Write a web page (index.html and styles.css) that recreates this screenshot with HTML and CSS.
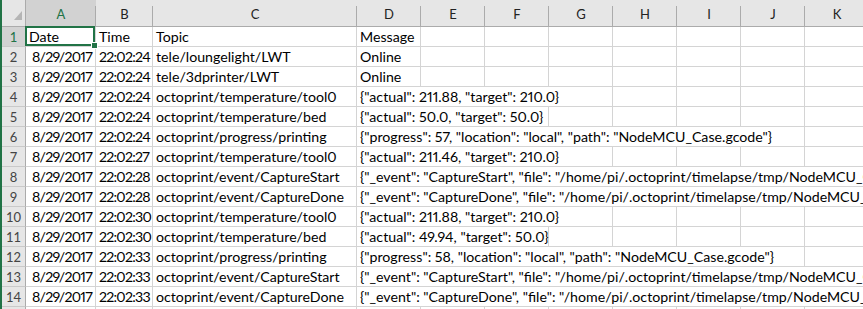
FILE: index.html
```html
<!DOCTYPE html>
<html>
<head>
    <meta charset="utf-8">
    <title>mqtt log.csv</title>
    <link rel="stylesheet" href="styles.css">
</head>
<body>
<div class="sheet" id="sheet">
    <div class="corner"><svg width="8" height="9" viewBox="0 0 8 9"><polygon points="8,0 8,9 0,9" fill="#b5b5b5"/></svg></div>
    <div class="hd sel">A</div>
    <div class="hd">B</div>
    <div class="hd">C</div>
    <div class="hd">D</div>
    <div class="hd">E</div>
    <div class="hd">F</div>
    <div class="hd">G</div>
    <div class="hd">H</div>
    <div class="hd">I</div>
    <div class="hd">J</div>
    <div class="hd">K</div>
</div>
<script>
    // date, time, topic, message, how many columns the message runs over
    const rows = [
        ['Date', 'Time', 'Topic', 'Message', 1],
        ['8/29/2017', '22:02:24', 'tele/loungelight/LWT', 'Online', 1],
        ['8/29/2017', '22:02:24', 'tele/3dprinter/LWT', 'Online', 1],
        ['8/29/2017', '22:02:24', 'octoprint/temperature/tool0', '{"actual": 211.88, "target": 210.0}', 4],
        ['8/29/2017', '22:02:24', 'octoprint/temperature/bed', '{"actual": 50.0, "target": 50.0}', 3],
        ['8/29/2017', '22:02:24', 'octoprint/progress/printing', '{"progress": 57, "location": "local", "path": "NodeMCU_Case.gcode"}', 7],
        ['8/29/2017', '22:02:27', 'octoprint/temperature/tool0', '{"actual": 211.46, "target": 210.0}', 4],
        ['8/29/2017', '22:02:28', 'octoprint/event/CaptureStart', '{"_event": "CaptureStart", "file": "/home/pi/.octoprint/timelapse/tmp/NodeMCU_Case-0.jpg"}', 8],
        ['8/29/2017', '22:02:28', 'octoprint/event/CaptureDone', '{"_event": "CaptureDone", "file": "/home/pi/.octoprint/timelapse/tmp/NodeMCU_Case-0.jpg"}', 8],
        ['8/29/2017', '22:02:30', 'octoprint/temperature/tool0', '{"actual": 211.88, "target": 210.0}', 4],
        ['8/29/2017', '22:02:30', 'octoprint/temperature/bed', '{"actual": 49.94, "target": 50.0}', 3],
        ['8/29/2017', '22:02:33', 'octoprint/progress/printing', '{"progress": 58, "location": "local", "path": "NodeMCU_Case.gcode"}', 7],
        ['8/29/2017', '22:02:33', 'octoprint/event/CaptureStart', '{"_event": "CaptureStart", "file": "/home/pi/.octoprint/timelapse/tmp/NodeMCU_Case-1.jpg"}', 8],
        ['8/29/2017', '22:02:33', 'octoprint/event/CaptureDone', '{"_event": "CaptureDone", "file": "/home/pi/.octoprint/timelapse/tmp/NodeMCU_Case-1.jpg"}', 8],
        ['', '', '', '', 1]
    ];

    const sheet = document.getElementById('sheet');

    function cell(cls, text) {
        const d = document.createElement('div');
        d.className = cls;
        d.textContent = text;
        sheet.appendChild(d);
        return d;
    }

    rows.forEach((r, i) => {
        const first = i === 0;
        cell(first ? 'rh sel' : 'rh', i + 1);
        cell(first ? 'c active' : 'c num', r[0]);
        cell(first ? 'c' : 'c num', r[1]);
        cell('c', r[2]);
        cell('c msg span-' + r[4], r[3]);
        for (let k = r[4]; k < 8; k++) cell('c', '');
    });
</script>
</body>
</html>
```

FILE: styles.css
```css
html, body { height: 309px; }
body { margin: 0; overflow: hidden; background: #fff; font-family: Lato, "Liberation Sans", sans-serif; }
.sheet { display: grid; grid-template-columns: 24px 70px 57px 204px repeat(8, 64px); grid-template-rows: 27px; grid-auto-rows: 20px; width: max-content; border-left: 2px solid #217346; }

/* headers */
.corner { display: flex; justify-content: flex-end; align-items: flex-end; padding: 0 3px 6px 0; background: #e6e6e6; border-right: 1px solid #ababab; border-bottom: 1px solid #ababab; }
.hd { display: flex; justify-content: center; align-items: flex-end; padding-bottom: 4px; font-size: 13px; color: #222; background: linear-gradient(#ababab, #ababab) right bottom / 1px 20px no-repeat, #e6e6e6; border-bottom: 1px solid #ababab; }
.hd.sel { background-color: #d2d2d2; color: #217346; }
.rh { display: flex; justify-content: center; align-items: center; padding-top: 1px; font-size: 13px; color: #444; background: #e6e6e6; border-right: 1px solid #ababab; border-bottom: 1px solid #c9c9c9; }
.rh.sel { background: #d2d2d2; color: #217346; }

/* cells */
.c { position: relative; padding: 1px 3px 0; font-size: 14.2px; line-height: 18px; color: #000; font-variant-numeric: proportional-nums; white-space: nowrap; overflow: hidden; border-right: 1px solid #d4d4d4; border-bottom: 1px solid #d4d4d4; }
.num { text-align: right; letter-spacing: -0.75px; }
.msg { overflow: visible; }
.span-3 { grid-column: span 3; }
.span-4 { grid-column: span 4; }
.span-7 { grid-column: span 7; }
.span-8 { grid-column: span 8; }

/* selected cell */
.active { overflow: visible; }
.active::after { content: ""; position: absolute; left: -1px; top: -1px; right: 0; bottom: 0; border: 2px solid #217346; }
.active::before { content: ""; position: absolute; right: -3px; bottom: -3px; width: 5px; height: 5px; background: #217346; border: 1px solid #fff; z-index: 1; }
```
